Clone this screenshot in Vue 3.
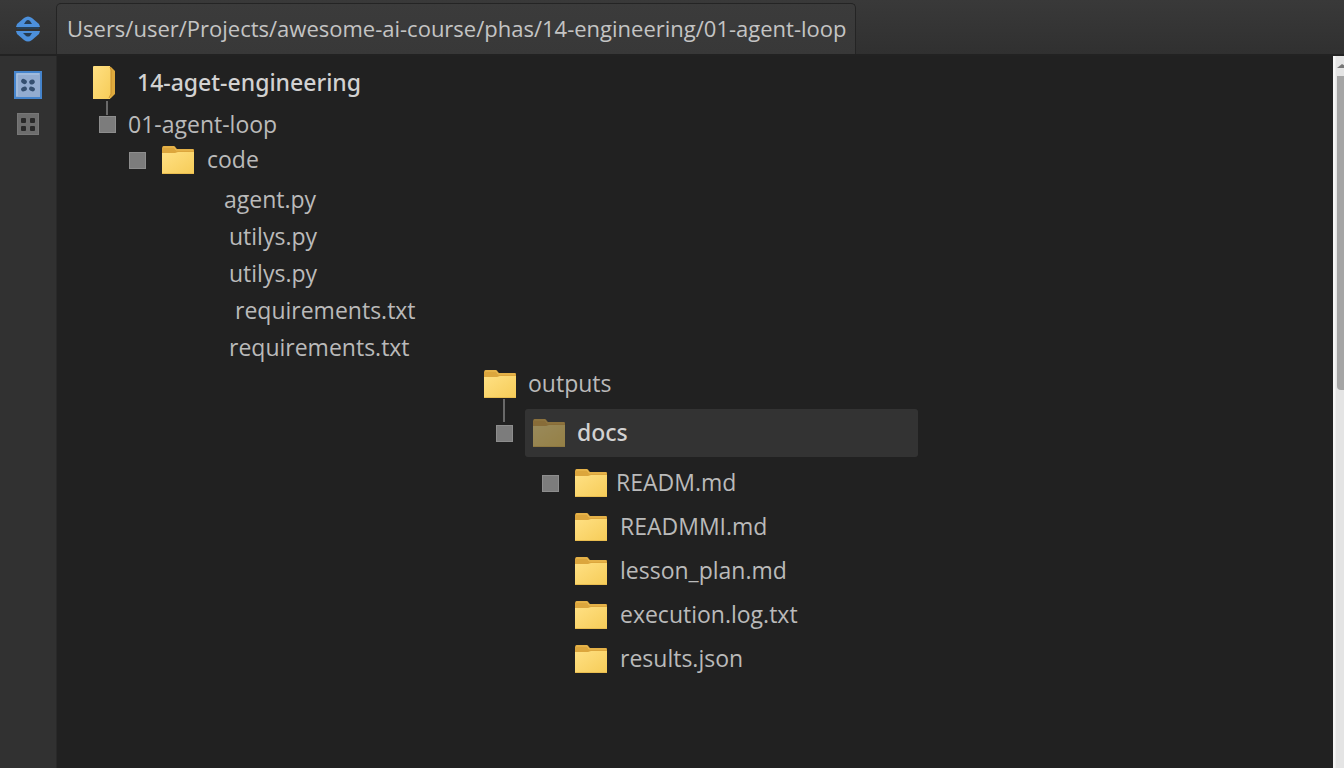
<script setup>
import { ref } from 'vue'

const path = 'Users/user/Projects/awesome-ai-course/phas/14-engineering/01-agent-loop'
const selected = ref('docs')

const codeFiles = [
  { name: 'agent.py', step: 'step-1' },
  { name: 'utilys.py', step: 'step-2' },
  { name: 'utilys.py', step: 'step-2' },
  { name: 'requirements.txt', step: 'step-3' },
  { name: 'requirements.txt', step: 'step-2' },
]

const docFiles = [
  { name: 'READM.md', toggle: true },
  { name: 'READMMI.md' },
  { name: 'lesson_plan.md' },
  { name: 'execution.log.txt' },
  { name: 'results.json' },
]
</script>

<template>
  <div class="window">
    <svg class="defs" aria-hidden="true">
      <defs>
        <linearGradient id="front" x1="0" y1="0" x2="1" y2="1">
          <stop offset="0" stop-color="#ffe083" />
          <stop offset="1" stop-color="#f6cc58" />
        </linearGradient>
        <symbol id="folder" viewBox="0 0 34 30">
          <path d="M1 3Q1 1 3 1H13Q14 1 15 3L16 4H32Q33 4 33 5V12H1Z" fill="#dca63d" />
          <path d="M2 2H13L15 5H32" fill="none" stroke="#edbd55" stroke-width="1" />
          <path d="M1 8H14L17 7H33V29H1Z" fill="url(#front)" />
          <path d="M1 28.5H33" stroke="#e9bd50" />
        </symbol>
      </defs>
    </svg>

    <header class="topbar">
      <button class="brand" type="button" aria-label="Switch view">
        <svg width="24" height="26" viewBox="0 0 24 26">
          <path d="M0 11L1 8L8 2Q12 -1 16 2L23 8L24 11Z" fill="#4c90dc" />
          <path d="M0 15H24L23 18L16 24Q12 27 8 24L1 18Z" fill="#4c90dc" />
          <path d="M1 12H23" stroke="#234463" stroke-width="1.5" />
          <path d="M8 8L10 5Q12 3 14 5L16 8Z" fill="#263b50" />
          <path d="M7 17H16L14 20Q12 21 10 20Z" fill="#263b50" />
        </svg>
      </button>
      <div class="path">{{ path }}</div>
    </header>

    <div class="body">
      <nav class="rail" aria-label="Views">
        <button type="button" aria-label="Tree view">
          <svg width="28" height="28" viewBox="0 0 28 28">
            <rect x="1" y="1" width="26" height="26" fill="#93acd0" stroke="#4584cc" stroke-width="2" />
            <path d="M3 25V3H25" fill="none" stroke="#adc8e8" />
            <g fill="#344f70">
              <ellipse cx="10" cy="10.500" rx="3" ry="2.300" transform="rotate(30 10 10.500)" />
              <ellipse cx="18" cy="11" rx="2.800" ry="2.400" transform="rotate(-25 18 11)" />
              <ellipse cx="10" cy="18" rx="3" ry="2.300" transform="rotate(-25 10 18)" />
              <ellipse cx="18" cy="18" rx="3" ry="2.200" transform="rotate(20 18 18)" />
            </g>
          </svg>
        </button>
        <button type="button" aria-label="Grid view">
          <svg width="22" height="22" viewBox="0 0 22 22">
            <rect x="0.500" y="0.500" width="21" height="21" fill="#6d6d6d" stroke="#777" />
            <g fill="#292929">
              <rect x="4" y="5" width="5" height="5" rx="1" />
              <rect x="13" y="5" width="5" height="5" rx="1" />
              <rect x="4" y="13" width="5" height="5" rx="1" />
              <rect x="13" y="13" width="5" height="5" rx="1" />
            </g>
          </svg>
        </button>
      </nav>

      <main class="tree">
        <div class="row root">
          <button class="item wide" type="button">
            <svg width="23" height="34" viewBox="0 0 23 34">
              <path d="M17 1H18L22 5V28L18 32L16 33Z" fill="#dfaa3d" />
              <path d="M0 1Q0 0 1 0H17L18 3V29L17 33H0Z" fill="url(#front)" />
              <path d="M17 1L18 4V28L16 32" fill="none" stroke="#c88f2e" />
            </svg>
            <span>14-aget-engineering</span>
          </button>
        </div>
        <div class="row lesson linked">
          <button class="toggle" type="button" aria-label="Toggle 01-agent-loop"></button>
          <button class="item" type="button">01-agent-loop</button>
        </div>
        <div class="row code">
          <button class="toggle" type="button" aria-label="Toggle code"></button>
          <button class="item" type="button">
            <svg class="folder"><use href="#folder" /></svg>
            <span>code</span>
          </button>
        </div>

        <ul class="files">
          <li v-for="(file, i) in codeFiles" :key="i" :class="file.step">
            <button class="item" type="button">{{ file.name }}</button>
          </li>
        </ul>

        <div class="row outputs">
          <button class="item" type="button">
            <svg class="folder"><use href="#folder" /></svg>
            <span>outputs</span>
          </button>
        </div>
        <div class="row docs linked">
          <button class="toggle" type="button" aria-label="Toggle docs"></button>
          <button
            class="item"
            :class="{ selected: selected === 'docs' }"
            type="button"
            @click="selected = 'docs'"
          >
            <svg class="folder"><use href="#folder" /></svg>
            <span>docs</span>
          </button>
        </div>

        <ul class="doc-files">
          <li v-for="file in docFiles" :key="file.name" :class="{ first: file.toggle }">
            <button
              v-if="file.toggle"
              class="toggle"
              type="button"
              :aria-label="'Toggle ' + file.name"
            ></button>
            <button class="item" type="button">
              <svg class="folder"><use href="#folder" /></svg>
              <span>{{ file.name }}</span>
            </button>
          </li>
        </ul>
      </main>

      <div class="scrollbar">
        <button type="button" aria-label="Scroll up">
          <svg width="8" height="6" viewBox="0 0 8 6"><path d="M0 5L5 1L8 3V5Z" fill="#777" /></svg>
        </button>
        <div class="thumb"></div>
      </div>
    </div>
  </div>
</template>

<style>
body {
  background: #212121;
}
</style>

<style scoped>
.window {
  min-height: 100vh;
  display: flex;
  flex-direction: column;
  overflow: hidden;
  font-family: "Open Sans", "Noto Sans", sans-serif;
  font-size: 23px;
  line-height: 30px;
  color: #bababa;
  background: #212121;
}
button {
  margin: 0;
  padding: 0;
  border: 0;
  background: none;
  font: inherit;
  color: inherit;
  text-align: left;
  white-space: nowrap;
}
svg {
  display: block;
  flex: none;
}
.defs {
  position: absolute;
  width: 0;
  height: 0;
}
.topbar {
  display: flex;
  align-items: stretch;
  height: 56px;
  box-sizing: border-box;
  padding-top: 3px;
  border-bottom: 2px solid #222;
  background: linear-gradient(#393939, #303030);
}
.brand {
  width: 56px;
  flex: none;
  display: flex;
  justify-content: center;
  align-items: center;
}
.path {
  padding: 9px 8px 0 10px;
  border: 1px solid #242424;
  border-bottom: 0;
  border-radius: 5px 5px 0 0;
  background: linear-gradient(#3b3b3b, #383838);
  color: #c4c4c4;
  font-size: 22px;
  white-space: nowrap;
}
.body {
  flex: 1;
  display: flex;
}
.rail {
  width: 57px;
  flex: none;
  display: flex;
  flex-direction: column;
  align-items: center;
  gap: 14px;
  padding-top: 15px;
  box-sizing: border-box;
  background: #313131;
  border-right: 1px solid #292929;
}
.tree {
  flex: 1;
  min-width: 0;
  padding-top: 5px;
}
.row {
  display: flex;
  align-items: center;
  gap: 12px;
}
.item {
  display: flex;
  align-items: center;
  gap: 11px;
}
.item span {
  padding-bottom: 2px;
}
.item.wide {
  gap: 21px;
}
.folder {
  width: 34px;
  height: 30px;
}
.toggle {
  width: 17px;
  height: 17px;
  flex: none;
  border: 1px solid #8d8d8d;
  background: #7c7c7c;
}
.linked {
  position: relative;
}
.linked::before {
  content: "";
  position: absolute;
  width: 2px;
  background: #696969;
}
.root {
  height: 44px;
  padding-left: 36px;
}
.root,
.docs .selected {
  color: #d2d2d2;
  font-family: "Noto Sans", sans-serif;
  font-weight: 500;
}
.lesson {
  height: 38px;
  padding-left: 42px;
}
.lesson::before {
  left: 49px;
  top: -4px;
  height: 14px;
}
.code {
  height: 34px;
  padding-left: 72px;
  gap: 15px;
}
.code .item {
  gap: 12px;
}
ul {
  list-style: none;
  margin: 0;
  padding: 0;
}
.files {
  padding: 3px 0 2px;
}
.files li {
  display: flex;
  height: 37px;
}
.step-1 {
  padding-left: 167px;
}
.step-2 {
  padding-left: 172px;
}
.step-3 {
  padding-left: 178px;
}
.outputs {
  height: 34px;
  padding-left: 426px;
}
.docs {
  margin-top: 8px;
  padding: 0 415px 0 439px;
}
.docs::before {
  left: 446px;
  top: -10px;
  height: 23px;
}
.docs .item {
  flex: 1;
  height: 48px;
  padding-left: 7px;
  border-radius: 3px;
}
.docs .selected {
  background: #333;
}
.docs .folder {
  opacity: 0.5;
}
.doc-files {
  padding-top: 4px;
}
.doc-files li {
  display: flex;
  align-items: center;
  height: 44px;
  padding-left: 517px;
}
.doc-files .item {
  gap: 12px;
}
.doc-files .first {
  gap: 15px;
  padding-left: 485px;
}
.doc-files .first .item {
  gap: 8px;
}
.scrollbar {
  width: 11px;
  flex: none;
  display: flex;
  flex-direction: column;
  box-sizing: border-box;
  padding-left: 4px;
  background: linear-gradient(90deg, #f5f5f5 2px, #e4e4e4 3px);
}
.scrollbar button {
  height: 20px;
  display: flex;
  align-items: center;
}
.thumb {
  height: 44vh;
  max-height: 314px;
  border-radius: 0 0 0 4px;
  background: #a5a5a5;
}
</style>
